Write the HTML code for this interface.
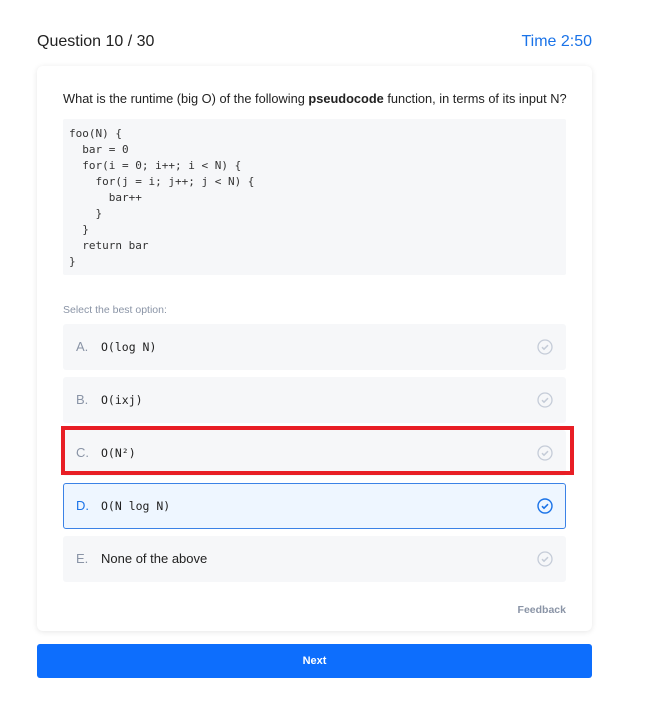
<!DOCTYPE html>
<html><head><style>
body{margin:0;background:#fff;font-family:"Liberation Sans",sans-serif;width:667px;height:707px;position:relative;overflow:hidden}
.abs{position:absolute}
.hdr{top:33px;font-size:16px;color:#222}
.card{left:37px;top:66px;width:555px;height:565px;border-radius:6px;box-shadow:0 1px 6px rgba(0,0,0,.1);background:#fff}
.q{left:63px;top:91px;font-size:12.8px;color:#222;white-space:nowrap}
pre{position:absolute;left:63px;top:119px;width:491px;height:142px;margin:0;padding:7px 6px;background:#f6f7f9;font-family:"DejaVu Sans Mono","Liberation Mono",monospace;font-size:11px;line-height:16px;color:#333;border-radius:2px}
.sel{left:63px;top:304px;font-size:10.5px;color:#8a94a6}
.opt{left:63px;width:503px;height:46px;background:#f6f7f9;border-radius:3px;box-sizing:border-box}
.opt .l{position:absolute;left:13px;top:15px;font-size:13px;color:#8a94a6}
.opt .t{position:absolute;left:38px;top:16px;font-size:11.5px;font-family:"DejaVu Sans Mono","Liberation Mono",monospace;color:#222}
.opt svg{position:absolute;right:13px;top:15px}
.red{left:61px;top:426px;width:513px;height:49px;border:4px solid #e81e25;box-sizing:border-box}
.btn{left:37px;top:644px;width:555px;height:34px;background:#0d6efd;border-radius:3px;color:#fff;font-size:11px;font-weight:bold;text-align:center;line-height:34px}
</style></head><body>
<div class="abs hdr" style="left:37px">Question 10 / 30</div>
<div class="abs hdr" style="right:75px;color:#1a73e8">Time 2:50</div>
<div class="abs card"></div>
<div class="abs q">What is the runtime (big O) of the following <b>pseudocode</b> function, in terms of its input N?</div>
<pre>foo(N) {
  bar = 0
  for(i = 0; i++; i &lt; N) {
    for(j = i; j++; j &lt; N) {
      bar++
    }
  }
  return bar
}</pre>
<div class="abs sel">Select the best option:</div>
<div class="abs opt" style="top:324px"><span class="l">A.</span><span class="t">O(log N)</span><svg width="16" height="16" viewBox="0 0 16 16"><circle cx="8" cy="8" r="7" fill="none" stroke="#c5ccd8" stroke-width="1.3"/><path d="M5 8.2l2 2 4-4" fill="none" stroke="#c5ccd8" stroke-width="1.5"/></svg></div>
<div class="abs opt" style="top:377px"><span class="l">B.</span><span class="t">O(ixj)</span><svg width="16" height="16" viewBox="0 0 16 16"><circle cx="8" cy="8" r="7" fill="none" stroke="#c5ccd8" stroke-width="1.3"/><path d="M5 8.2l2 2 4-4" fill="none" stroke="#c5ccd8" stroke-width="1.5"/></svg></div>
<div class="abs opt" style="top:430px"><span class="l">C.</span><span class="t">O(N²)</span><svg width="16" height="16" viewBox="0 0 16 16"><circle cx="8" cy="8" r="7" fill="none" stroke="#c5ccd8" stroke-width="1.3"/><path d="M5 8.2l2 2 4-4" fill="none" stroke="#c5ccd8" stroke-width="1.5"/></svg></div>
<div class="abs opt" style="top:483px;background:#eef6ff;border:1px solid #3b82e6"><span class="l" style="color:#1a73e8;top:14px;left:12px">D.</span><span class="t" style="top:15px;left:37px">O(N log N)</span><svg width="16" height="16" viewBox="0 0 16 16" style="right:12px;top:14px"><circle cx="8" cy="8" r="7" fill="none" stroke="#1a73e8" stroke-width="1.4"/><path d="M5 8.2l2 2 4-4" fill="none" stroke="#1a73e8" stroke-width="1.6"/></svg></div>
<div class="abs opt" style="top:536px"><span class="l">E.</span><span class="t" style="font-family:'Liberation Sans',sans-serif;font-size:13px;top:15px">None of the above</span><svg width="16" height="16" viewBox="0 0 16 16"><circle cx="8" cy="8" r="7" fill="none" stroke="#c5ccd8" stroke-width="1.3"/><path d="M5 8.2l2 2 4-4" fill="none" stroke="#c5ccd8" stroke-width="1.5"/></svg></div>
<div class="abs red"></div>
<div class="abs" style="right:101px;top:604px;font-size:10.5px;color:#8a94a6;font-weight:bold">Feedback</div>
<div class="abs btn">Next</div>
</body></html>
